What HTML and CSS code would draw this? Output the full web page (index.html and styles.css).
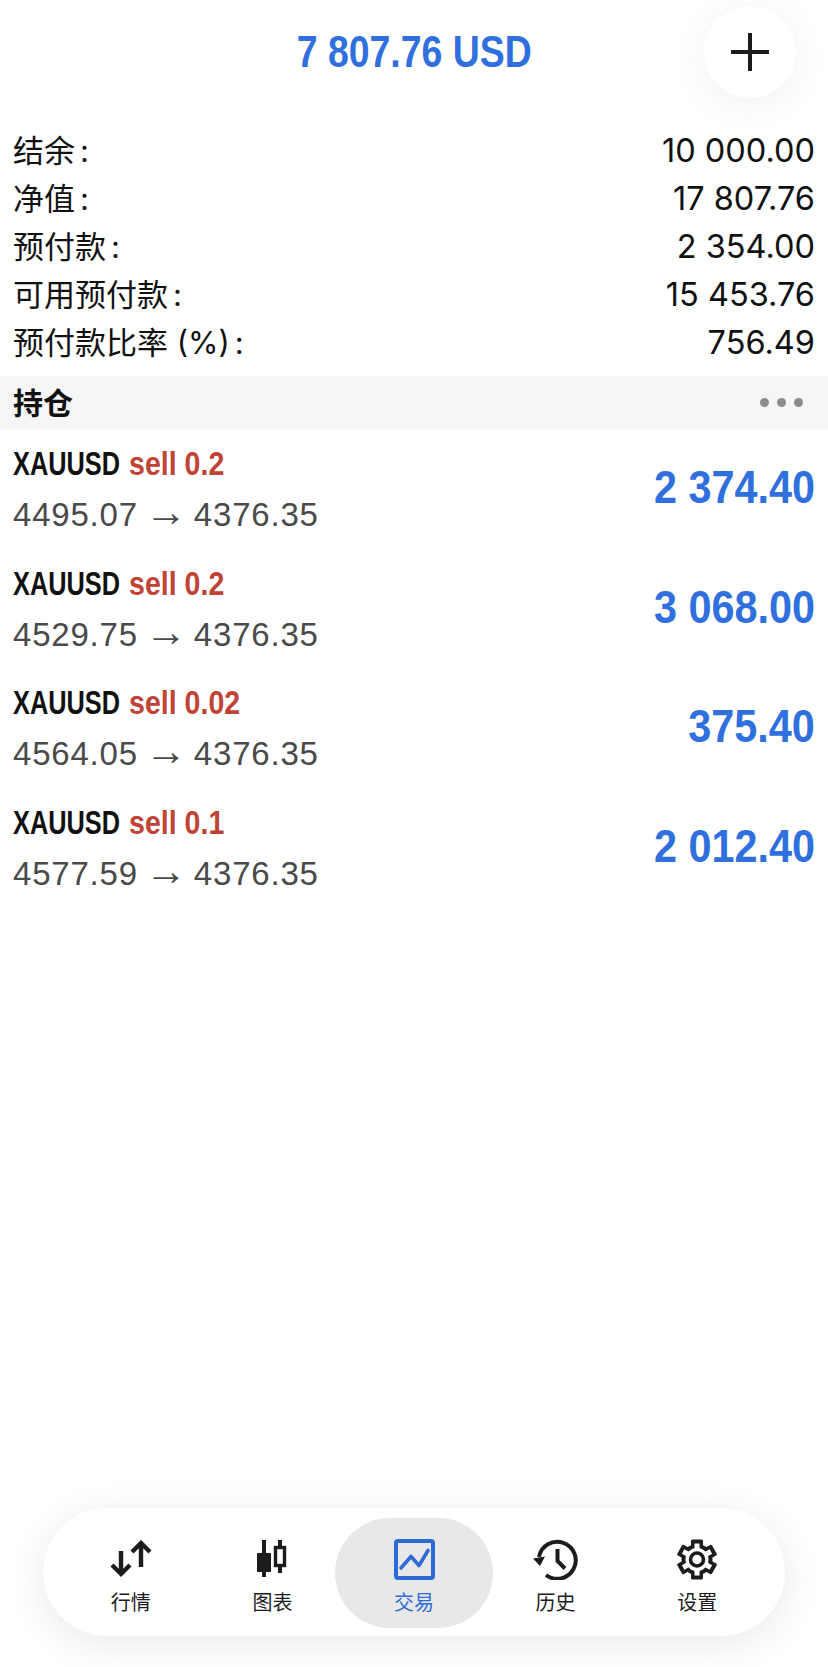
FILE: index.html
```html
<!DOCTYPE html>
<html>
	<head>
		<meta charset="utf-8" />
		<title>交易</title>
		<link rel="stylesheet" href="styles.css">
	</head>
	<body>
		<div class="page">
			<header class="top">
				<div class="balance">7 807.76 USD</div>
				<button class="addBtn">
					<svg width="38" height="38" viewBox="0 0 38 38"><path d="M19 0V38M0 19H38" stroke="#1c1c1e" stroke-width="4" fill="none"/></svg>
				</button>
			</header>
			<ul class="summary">
				<li class="sumRow"><span class="sumName">结余<i class="colon">:</i></span><span class="sumVal">10 000.00</span></li>
				<li class="sumRow"><span class="sumName">净值<i class="colon">:</i></span><span class="sumVal">17 807.76</span></li>
				<li class="sumRow"><span class="sumName">预付款<i class="colon">:</i></span><span class="sumVal">2 354.00</span></li>
				<li class="sumRow"><span class="sumName">可用预付款<i class="colon">:</i></span><span class="sumVal">15 453.76</span></li>
				<li class="sumRow"><span class="sumName">预付款比率 (%)<i class="colon">:</i></span><span class="sumVal">756.49</span></li>
			</ul>
			<div class="section">
				<span class="sectionName">持仓</span>
				<span class="dots"><i></i><i></i><i></i></span>
			</div>
			<ul class="positions">
				<li class="pos">
					<div class="posInfo">
						<div class="posHead"><b class="symbol">XAUUSD</b><span class="side">sell 0.2</span></div>
						<div class="posPrice">4495.07 <span class="arrow">→</span> 4376.35</div>
					</div>
					<div class="profit">2 374.40</div>
				</li>
				<li class="pos">
					<div class="posInfo">
						<div class="posHead"><b class="symbol">XAUUSD</b><span class="side">sell 0.2</span></div>
						<div class="posPrice">4529.75 <span class="arrow">→</span> 4376.35</div>
					</div>
					<div class="profit">3 068.00</div>
				</li>
				<li class="pos">
					<div class="posInfo">
						<div class="posHead"><b class="symbol">XAUUSD</b><span class="side">sell 0.02</span></div>
						<div class="posPrice">4564.05 <span class="arrow">→</span> 4376.35</div>
					</div>
					<div class="profit">375.40</div>
				</li>
				<li class="pos">
					<div class="posInfo">
						<div class="posHead"><b class="symbol">XAUUSD</b><span class="side">sell 0.1</span></div>
						<div class="posPrice">4577.59 <span class="arrow">→</span> 4376.35</div>
					</div>
					<div class="profit">2 012.40</div>
				</li>
			</ul>
			<nav class="tabBar">
				<div class="tab">
					<div class="tabIcon">
						<svg width="42" height="38" viewBox="0 0 42 38" fill="none" stroke="#1c1c1e" stroke-width="4.4"><path d="M11 11V34M2 25L11 34L20 25"/><path d="M31 27V3M22 12L31 3L40 12"/></svg>
					</div>
					<span>行情</span>
				</div>
				<div class="tab">
					<div class="tabIcon">
						<svg width="30" height="38" viewBox="0 0 30 38" fill="none" stroke="#1c1c1e"><path d="M7 0V37" stroke-width="4"/><rect x="0" y="13" width="14" height="19" fill="#1c1c1e" stroke="none"/><path d="M23 0V33" stroke-width="4"/><rect x="18.500" y="7.500" width="9" height="18" fill="#fff" stroke-width="3.400"/></svg>
					</div>
					<span>图表</span>
				</div>
				<div class="tab active">
					<div class="tabIcon">
						<svg width="41" height="41" viewBox="0 0 41 41" fill="none" stroke="#2f6bd6" stroke-width="4"><rect x="2" y="2" width="37" height="37" rx="2"/><path d="M7 29L17 17.500L25 26.500L34 11.500" stroke-width="3.600" stroke-linecap="round" stroke-linejoin="round"/></svg>
					</div>
					<span>交易</span>
				</div>
				<div class="tab">
					<div class="tabIcon">
						<svg width="46" height="41" viewBox="0 0 46 41" fill="none" stroke="#1c1c1e" stroke-width="4"><path d="M6 18A18.500 18.500 0 1 1 13 36"/><path d="M0 19.500L12 17.500L7 27Z" fill="#1c1c1e" stroke="none"/><path d="M24.500 10V22L32 29.500"/></svg>
					</div>
					<span>历史</span>
				</div>
				<div class="tab">
					<div class="tabIcon">
						<svg width="40" height="41" viewBox="-20 -20.500 40 41">
							<g fill="#1c1c1e">
								<circle r="15.500"/>
								<rect x="-6" y="-20" width="12" height="40" rx="1.500"/>
								<rect x="-6" y="-20" width="12" height="40" rx="1.500" transform="rotate(60)"/>
								<rect x="-6" y="-20" width="12" height="40" rx="1.500" transform="rotate(120)"/>
							</g>
							<g fill="#fff">
								<circle r="11.500"/>
								<rect x="-2.500" y="-16" width="5" height="32"/>
								<rect x="-2.500" y="-16" width="5" height="32" transform="rotate(60)"/>
								<rect x="-2.500" y="-16" width="5" height="32" transform="rotate(120)"/>
							</g>
							<circle r="6.500" fill="none" stroke="#1c1c1e" stroke-width="3.600"/>
						</svg>
					</div>
					<span>设置</span>
				</div>
			</nav>
		</div>
	</body>
</html>
```
FILE: styles.css
```css
*{
	box-sizing: border-box;
}
html,body{
	margin: 0;
	padding: 0;
	background: #fff;
}
ul{
	list-style: none;
	margin: 0;
	padding: 0;
}
.page{
	position: relative;
	width: 828px;
	height: 1667px;
	overflow: hidden;
	font-family: "Liberation Sans", "Noto Sans CJK SC", sans-serif;
	color: #111;
}
/* 顶部余额 */
.top{
	position: relative;
	height: 121px;
	display: flex;
	justify-content: center;
	padding-top: 24px;
}
.balance{
	font-weight: bold;
	font-size: 44px;
	line-height: 56px;
	color: #2f6fde;
	white-space: nowrap;
	transform: scaleX(.85);
}
.addBtn{
	position: absolute;
	top: 6px;
	left: 704px;
	width: 92px;
	height: 92px;
	padding: 0;
	border: 0;
	border-radius: 50%;
	background: #fff;
	box-shadow: 0 6px 40px rgba(0,0,0,0.06);
	display: flex;
	align-items: center;
	justify-content: center;
}
/* 账户数据 */
.summary{
	padding: 6px 13px 0 13px;
	height: 255px;
}
.sumRow{
	display: flex;
	justify-content: space-between;
	height: 48px;
	line-height: 48px;
}
.sumName{
	font-family: "Inter", "Noto Sans CJK SC", sans-serif;
	font-size: 31px;
}
.colon{
	font-style: normal;
	margin-left: 5px;
}
.sumVal{
	font-family: "Inter", sans-serif;
	font-size: 32.5px;
	color: #111;
}
.section{
	height: 53px;
	background: #f6f6f6;
	display: flex;
	align-items: center;
	justify-content: space-between;
	padding: 0 25px 4px 13px;
}
.sectionName{
	font-size: 30px;
	font-weight: bold;
}
.dots{
	display: flex;
	gap: 8px;
	padding-top: 4px;
}
.dots i{
	width: 9px;
	height: 9px;
	border-radius: 50%;
	background: #8c8c8c;
}
/* 持仓列表 */
.pos{
	height: 119.5px;
	display: flex;
	align-items: center;
	justify-content: space-between;
	padding: 0 13px 0 13px;
}
.posHead{
	display: flex;
	font-size: 34px;
	line-height: 46px;
	padding-top: 1px;
	margin-bottom: -1px;
}
.symbol{
	width: 116px;
	white-space: nowrap;
	transform: scaleX(.745);
	transform-origin: left center;
}
.side{
	font-weight: bold;
	color: #bf4436;
	white-space: nowrap;
	transform: scaleX(.84);
	transform-origin: left center;
}
.posPrice{
	font-size: 33px;
	line-height: 46px;
	letter-spacing: .8px;
	color: #4a4a4a;
	margin-top: 4px;
	white-space: nowrap;
}
.arrow{
	font-size: 42px;
	letter-spacing: 0;
	margin: 0 -3px;
}
.profit{
	font-weight: bold;
	font-size: 47px;
	color: #2f6fde;
	white-space: nowrap;
	transform: scaleX(.88);
	transform-origin: right center;
	margin-bottom: 4px;
}
/* 底部导航 */
.tabBar{
	position: absolute;
	left: 43px;
	top: 1508px;
	width: 742px;
	height: 128px;
	border-radius: 64px;
	background: #fff;
	box-shadow: 0 8px 40px rgba(0,0,0,0.09);
	display: flex;
	align-items: flex-start;
	padding: 10px 17px 0;
}
.tab{
	flex: 0 0 141.6px;
	height: 110px;
	border-radius: 55px;
	display: flex;
	flex-direction: column;
	align-items: center;
	padding-top: 20px;
	font-size: 20px;
	line-height: 24px;
	color: #1c1c1e;
}
.tabIcon{
	height: 42px;
	margin-bottom: 11px;
	display: flex;
	align-items: center;
	justify-content: center;
}
.tab.active{
	flex: 0 0 158px;
	margin: 0 -8.2px;
	background: #e8e8e8;
	color: #2f6bd6;
}
```
